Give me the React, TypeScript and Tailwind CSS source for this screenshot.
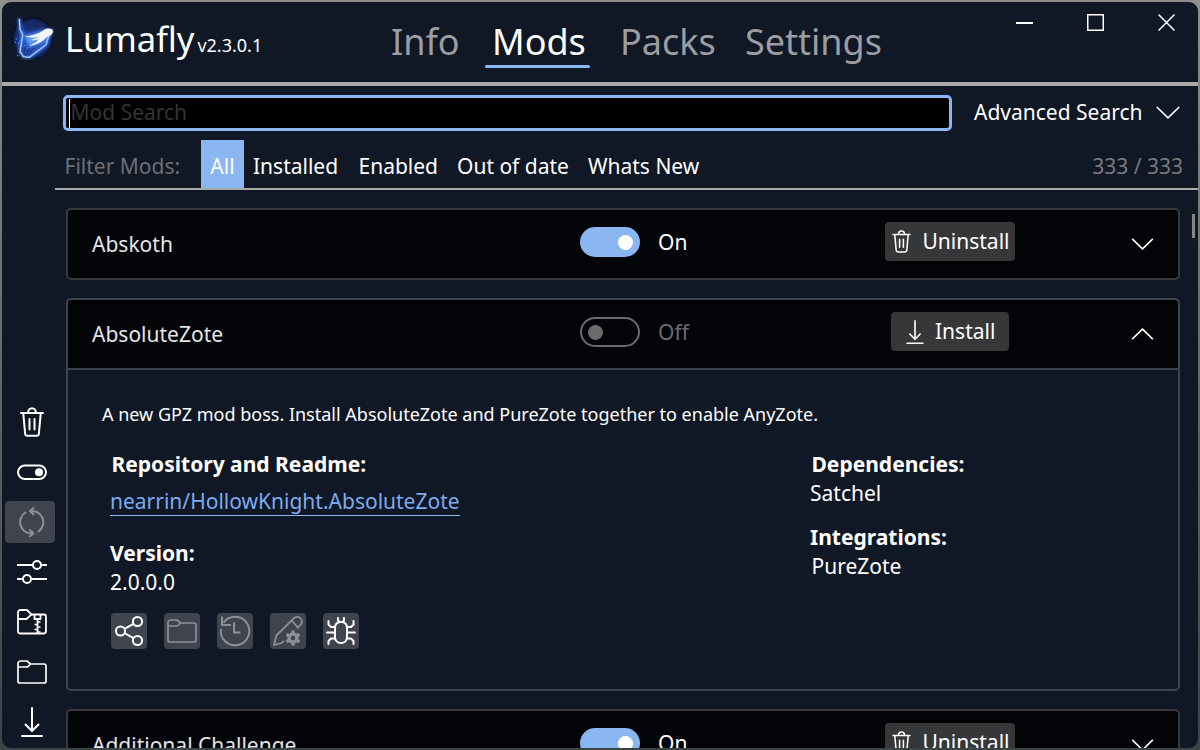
import type { ReactNode } from 'react';

type IconProps = { className?: string };

function Logo() {
  return (
    <svg viewBox="0 0 44 44" className="h-[44px] w-[44px] shrink-0">
      <defs>
        <radialGradient id="orb" cx="50%" cy="52%" r="50%">
          <stop offset="0" stopColor="#2f5fd0" />
          <stop offset="0.6" stopColor="#1d3f9c" />
          <stop offset="0.88" stopColor="#11214f" />
          <stop offset="1" stopColor="#090d1b" />
        </radialGradient>
        <filter id="glow" x="-30%" y="-30%" width="160%" height="160%">
          <feGaussianBlur stdDeviation="1.5" />
        </filter>
        <filter id="soft" x="-20%" y="-20%" width="140%" height="140%">
          <feGaussianBlur stdDeviation="0.5" />
        </filter>
      </defs>
      <circle cx="21.500" cy="22" r="21" fill="url(#orb)" />
      <path d="M13 7c7-5 17-3 22 3-6 4-12 5-21 5z" fill="#142a68" filter="url(#glow)" />
      <path d="M13 20c8 0 18-8 29-7 0 9-10 16-24 18z" fill="#5f95f5" filter="url(#glow)" />
      <path d="M8.300 2.700L9 13.300l2.700 5.400L9 35.300l3.300 5.400 6 .6L35 28.700 37.700 20" fill="none" stroke="#3f7dff" strokeWidth="3" filter="url(#glow)" />
      <path d="M8.300 2.700L9 13.300l2.700 5.400L9 35.300l3.300 5.400 6 .6L35 28.700 37.700 20" fill="none" stroke="#a6cdff" strokeWidth="1.300" strokeLinejoin="round" filter="url(#soft)" />
      <path d="M14 20c7 0 13-2 19-6 3-2 8-2 9 1 0 3-3 5-6 6-4 4-10 8-18 9 4-2 8-4 10-7-3 1-6 2-8 1 3-1 6-2 8-3-5 1-10 1-14-1z" fill="#f2f8ff" filter="url(#soft)" />
      <path d="M10 24l-4 5M9 36l-4 6M13 29l3 3 4-1M14 36l4 1M4 27l2-7" stroke="#4c8cff" strokeWidth="1.200" strokeDasharray="1.500 2" fill="none" />
    </svg>
  );
}

function Trash({ className }: IconProps) {
  return (
    <svg viewBox="0 0 24 30" className={className} fill="none" stroke="currentColor" strokeWidth="2" strokeLinecap="round" strokeLinejoin="round">
      <path d="M1 6h22M8 6c0-6.400 8-6.400 8 0M3.300 6.500l1.800 20a2.400 2.400 0 0 0 2.400 2.300h9a2.400 2.400 0 0 0 2.400-2.300l1.800-20M9.500 12v10.500M14.500 12v10.500" />
    </svg>
  );
}

function TogglePill({ className }: IconProps) {
  return (
    <svg viewBox="0 0 30 16" className={className}>
      <rect x="1" y="1.500" width="28" height="13.500" rx="6.750" fill="none" stroke="currentColor" strokeWidth="2" />
      <circle cx="22" cy="8.200" r="4" fill="currentColor" />
    </svg>
  );
}

function Sync({ className }: IconProps) {
  return (
    <svg viewBox="0 0 26 30" className={className} fill="none" stroke="currentColor" strokeWidth="2" strokeLinecap="round" strokeLinejoin="round">
      <path d="M12 4A11.300 11.300 0 0 1 19.500 24.500M14.500 1l-3.500 3 3.500 3.500" />
      <path d="M6.500 5.500A11.300 11.300 0 0 0 14 26.300M11 29.500l3.500-3.200-3.500-3.300" />
    </svg>
  );
}

function Sliders({ className }: IconProps) {
  return (
    <svg viewBox="0 0 30 24" className={className} fill="none" stroke="currentColor" strokeWidth="2">
      <path d="M0 5h16M24 5h6M0 19h6M14 19h16" />
      <circle cx="20" cy="5" r="4" />
      <circle cx="10" cy="19" r="4" />
    </svg>
  );
}

function Folder({ className }: IconProps) {
  return (
    <svg viewBox="0 0 30 24" className={className} fill="none" stroke="currentColor" strokeWidth="1.700" strokeLinejoin="round">
      <path d="M1 3.500A2.500 2.500 0 0 1 3.500 1H10l3.500 3H27a2 2 0 0 1 2 2v15a2 2 0 0 1-2 2H3a2 2 0 0 1-2-2z" />
      <path d="M1 7h9.500L13.500 4" />
    </svg>
  );
}

function ZipFolder({ className }: IconProps) {
  return (
    <svg viewBox="0 0 30 26" className={className} fill="none" stroke="currentColor" strokeWidth="1.800" strokeLinejoin="round">
      <path d="M1 3.500A2.500 2.500 0 0 1 3.500 1H10l4.500 4.500H27a2 2 0 0 1 2 2V22a2.500 2.500 0 0 1-2.500 2.500h-23A2.500 2.500 0 0 1 1 22z" />
      <path d="M1 10h8.500l5-4.500M17.500 5.500v4.500h6V5.500M20.500 10v14" />
      <path d="M20.500 13h3M17.500 15.500h3M20.500 18h3M17.500 20.500h3M20.500 23h3" strokeWidth="1.500" />
    </svg>
  );
}

function Download({ className }: IconProps) {
  return (
    <svg viewBox="0 0 22 30" className={className} fill="none" stroke="currentColor" strokeWidth="2" strokeLinecap="round" strokeLinejoin="round">
      <path d="M11 1v22.500M4.500 17.500L11 24l6.500-6.500M1 29h20" />
    </svg>
  );
}

function Share({ className }: IconProps) {
  return (
    <svg viewBox="0 0 36 36" className={className} fill="none" stroke="currentColor" strokeWidth="2">
      <circle cx="9.500" cy="18" r="4.600" />
      <circle cx="26.500" cy="8.500" r="4.600" />
      <circle cx="26.500" cy="27.500" r="4.600" />
      <path d="M13.500 15.800l9-5M13.500 20.200l9 5" />
    </svg>
  );
}

function History({ className }: IconProps) {
  return (
    <svg viewBox="0 0 36 36" className={className} fill="none" stroke="currentColor" strokeWidth="2" strokeLinejoin="round">
      <path d="M4 16A14.200 14.200 0 1 0 6.500 9.800" />
      <path d="M5 3.500V12h9M17 9.500v10h6.500" />
    </svg>
  );
}

function EditSettings({ className }: IconProps) {
  return (
    <svg viewBox="0 0 36 36" className={className} fill="none" stroke="currentColor" strokeWidth="1.800" strokeLinejoin="round">
      <path d="M14 28l-2.500 2L4 32l2.300-9.500L24 5.200a4.400 4.400 0 0 1 6.600.2 4.400 4.400 0 0 1 0 6.300L27 15.500M21.500 7.500l6.500 7" />
      <circle cx="23" cy="25" r="4" strokeWidth="3.400" />
      <path d="M23 17.500v4M23 28.500v4M16.500 21.250l3.500 2M26 26.750l3.500 2M16.500 28.750l3.500-2M26 23.250l3.500-2" strokeWidth="3.200" />
    </svg>
  );
}

function Bug({ className }: IconProps) {
  return (
    <svg viewBox="0 0 36 36" className={className} fill="none" stroke="currentColor" strokeWidth="2" strokeLinecap="round" strokeLinejoin="round">
      <path d="M18 9c4 0 6 2 6 6v9c0 4-3 6-6 6s-6-2-6-6v-9c0-4 2-6 6-6z" />
      <path d="M15 5v2.500l1.500 1.500M21 5v2.500L19.500 9M5.500 8v3.500L8 14h4M30.500 8v3.500L28 14h-4M4 19.500h8M24 19.500h8M5.500 31v-3L8 25.500h4M30.500 31v-3L28 25.500h-4" />
    </svg>
  );
}

function Chevron({ up = false, className }: IconProps & { up?: boolean }) {
  return (
    <svg viewBox="0 0 24 13" className={className} fill="none" stroke="currentColor" strokeWidth="1.700">
      <path d={up ? 'M.8 12L12 1.200 23.200 12' : 'M.8 1L12 11.800 23.200 1'} />
    </svg>
  );
}

function Tab({ label, active = false, className }: { label: string; active?: boolean; className: string }) {
  return (
    <div className={`flex flex-col ${className}`}>
      <span className={`whitespace-nowrap text-[36px] leading-[50px] ${active ? 'pl-[7px] text-white' : 'pl-2 text-[#9b9da2]'}`}>{label}</span>
      {active && <span className="-mt-[2px] h-[3px] rounded-full bg-[#8ab6f1]" />}
    </div>
  );
}

function ModHeader({ name, on = false, installed = false, open = false }: { name: string; on?: boolean; installed?: boolean; open?: boolean }) {
  return (
    <div className={`flex h-[68px] shrink-0 items-start bg-[#030408] pl-6 ${open ? 'rounded-t-[4px]' : 'rounded-[4px]'}`}>
      <span className="w-[488px] pt-[18px] text-[21px] leading-8 text-[#e4e5e6]">{name}</span>
      <div className={`mt-[17px] flex h-[30px] w-[60px] items-center rounded-full ${on ? 'justify-end bg-[#8ab6f1] pr-[7px]' : 'border-2 border-[#6b6b6d] pl-[6px]'}`}>
        <span className={`h-[15px] w-[15px] rounded-full ${on ? 'bg-white' : 'bg-[#6b6b6d]'}`} />
      </div>
      <span className={`ml-[18px] w-[187px] pt-4 text-[21px] leading-8 ${on ? 'text-white' : 'text-[#6b6b6d]'}`}>{on ? 'On' : 'Off'}</span>
      <div className="flex w-[210px] justify-center pt-3">
        <button className={`flex h-[39px] items-center rounded-[4px] bg-[#363739] text-[21px] leading-8 text-white ${installed ? 'w-[130px] pl-[7px]' : 'w-[118px] pl-[15px]'}`}>
          {installed ? <Trash className="mr-[11.5px] h-[23px] w-[19px]" /> : <Download className="mr-[11px] h-6 w-[18px]" />}
          <span className="pb-[2px]">{installed ? 'Uninstall' : 'Install'}</span>
        </button>
      </div>
      <Chevron up={open} className="ml-[76px] mt-[28px] h-[12px] w-[23px] text-white" />
    </div>
  );
}

function ActionButton({ children, muted = false }: { children: ReactNode; muted?: boolean }) {
  return (
    <button className={`flex h-9 w-9 items-center justify-center rounded-[4px] bg-[#3f444f] ${muted ? 'text-[#8d9097]' : 'text-white'}`}>{children}</button>
  );
}

function SideButton({ children, busy = false }: { children: ReactNode; busy?: boolean }) {
  return (
    <button className={`flex h-[42px] w-[50px] items-center justify-center rounded-[4px] pl-1 ${busy ? 'bg-[#3f444f] text-[#8d9097]' : 'text-white'}`}>{children}</button>
  );
}

export default function App() {
  return (
    <div className="h-[750px] w-[1200px] overflow-hidden bg-linear-to-b from-[#8d908c] via-[#626967] to-[#394545] p-[2px] font-['Noto_Sans',sans-serif]">
      <div className="flex h-[746px] w-[1196px] flex-col overflow-hidden rounded-[9px] bg-[#101725]">
        <header className="flex h-[84px] shrink-0 items-start border-b-4 border-[#a9a9a9]">
          <div className="flex w-[381px] pl-[9px] pt-[14px]">
            <Logo />
            <div className="-mt-px flex items-baseline pl-[10px] text-white">
              <span className="text-[34.5px] leading-[48px]">Lumafly</span>
              <span className="ml-[3px] text-[18px]">v2.3.0.1</span>
            </div>
          </div>
          <nav className="flex pt-[15px]">
            <Tab label="Info" className="w-[102px]" />
            <Tab label="Mods" active className="mr-[22px] w-[105px]" />
            <Tab label="Packs" className="w-[125px]" />
            <Tab label="Settings" className="w-[160px]" />
          </nav>
          <div className="flex gap-[54px] pl-[119px] pt-[12px] text-white">
            <svg viewBox="0 0 17 17" className="h-[17px] w-[17px]"><path d="M0 9h17" stroke="currentColor" strokeWidth="2" /></svg>
            <svg viewBox="0 0 17 17" className="h-[17px] w-[17px]"><rect x="0.750" y="0.750" width="15.500" height="15.500" fill="none" stroke="currentColor" strokeWidth="1.500" /></svg>
            <svg viewBox="0 0 17 17" className="h-[17px] w-[17px]"><path d="M.5.500l16 16M16.500.500l-16 16" stroke="currentColor" strokeWidth="1.500" /></svg>
          </div>
        </header>

        <div className="flex min-h-0 flex-1">
          <aside className="flex w-[53px] shrink-0 flex-col gap-2 pl-[3px] pt-[315px]">
            <SideButton><Trash className="h-[30px] w-6" /></SideButton>
            <SideButton><TogglePill className="h-4 w-[30px]" /></SideButton>
            <SideButton busy><Sync className="h-[30px] w-[26px]" /></SideButton>
            <SideButton><Sliders className="h-6 w-[30px]" /></SideButton>
            <SideButton><ZipFolder className="h-[26px] w-[30px]" /></SideButton>
            <SideButton><Folder className="h-6 w-[30px]" /></SideButton>
            <SideButton><Download className="h-[30px] w-[22px]" /></SideButton>
          </aside>

          <main className="flex min-w-0 flex-1 flex-col">
            <div className="flex h-[54px] shrink-0 items-start pl-2 pt-[9px]">
              <div className="flex h-9 w-[889px] items-center rounded-[5px] border-[3px] border-[#8ab6f1] bg-black pl-[3px]">
                <span className="h-[29px] w-px bg-white" />
                <span className="pb-[2px] pl-[0.5px] text-[21px] leading-[28px] text-[#333333]">Mod Search</span>
              </div>
              <span className="ml-[22px] w-[181.5px] whitespace-nowrap pt-px text-[21px] leading-8 text-white">Advanced Search</span>
              <Chevron className="mt-[11px] h-[13px] w-6 text-white" />
            </div>

            <div className="flex h-[50px] shrink-0 items-stretch border-b-2 border-[#a9a9a9] pl-[9.5px] pr-[15px] text-[21px] leading-[53px] whitespace-nowrap text-white">
              <span className="w-[136.5px] text-[#6b6f77]">Filter Mods:</span>
              <span className="w-[43px] bg-[#8ab6f1] text-center">All</span>
              <span className="w-[114.5px] pl-[9px]">Installed</span>
              <span className="w-[98.5px]">Enabled</span>
              <span className="w-[131px]">Out of date</span>
              <span>Whats New</span>
              <span className="ml-auto text-[#77777a]">333 / 333</span>
            </div>

            <div className="flex min-h-0 flex-1 overflow-hidden">
              <div className="flex w-[1125px] flex-col gap-[18px] pl-[11px] pt-[18px]">
                <section className="shrink-0 rounded-[5px] border-2 border-[#38393e]">
                  <ModHeader name="Abskoth" on installed />
                </section>

                <section className="h-[393px] shrink-0 rounded-[5px] border-2 border-[#3f434c]">
                  <ModHeader name="AbsoluteZote" open />
                  <div className="border-t-2 border-[#3f434c] pl-[34px] pt-[31px] text-white">
                    <p className="text-[18px] leading-[26px] whitespace-nowrap">A new GPZ mod boss. Install AbsoluteZote and PureZote together to enable AnyZote.</p>
                    <div className="flex pl-2 pt-[23px] text-[21px] leading-[29px]">
                      <div className="w-[700px]">
                        <h2 className="pl-[1.5px] font-bold">Repository and Readme:</h2>
                        <a className="mt-[8px] inline-block h-[29px] border-b border-[#8ab6f1] text-[#7cabf0]">nearrin/HollowKnight.AbsoluteZote</a>
                        <h2 className="mt-[23px] font-bold">Version:</h2>
                        <p>2.0.0.0</p>
                        <div className="flex gap-[17px] pl-px pt-4">
                          <ActionButton><Share className="h-9 w-9" /></ActionButton>
                          <ActionButton muted><Folder className="h-6 w-[30px]" /></ActionButton>
                          <ActionButton muted><History className="h-9 w-9" /></ActionButton>
                          <ActionButton muted><EditSettings className="h-9 w-9" /></ActionButton>
                          <ActionButton><Bug className="h-9 w-9" /></ActionButton>
                        </div>
                      </div>
                      <div>
                        <h2 className="pl-[1.5px] font-bold">Dependencies:</h2>
                        <p>Satchel</p>
                        <h2 className="mt-[15px] font-bold">Integrations:</h2>
                        <p className="pl-[1.5px]">PureZote</p>
                      </div>
                    </div>
                  </div>
                </section>

                <section className="shrink-0 rounded-[5px] border-2 border-[#38393e]">
                  <ModHeader name="Additional Challenge" on installed />
                </section>
              </div>
              <div className="ml-[12px] mt-6 h-6 w-[3px] bg-[#858585]" />
            </div>
          </main>
        </div>
      </div>
    </div>
  );
}
